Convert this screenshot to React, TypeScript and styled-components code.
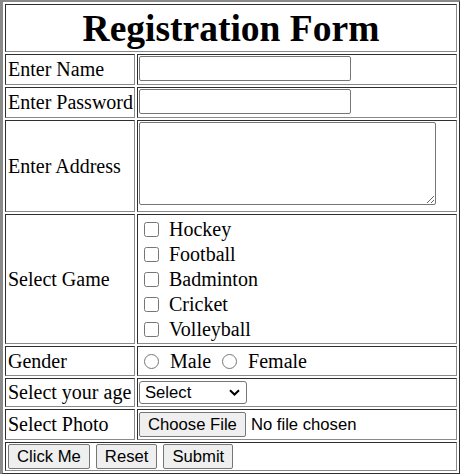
import React from 'react';
import styled, { createGlobalStyle } from 'styled-components';

const GlobalStyle = createGlobalStyle`
  body {
    margin: 0;
    background: #fff;
    font-family: "Liberation Serif", "Times New Roman", serif;
  }
`;

const FormTable = styled.table`
  box-sizing: border-box;
  width: 461px;
  border: 2px solid;
  border-left-width: 3px;
  border-color: #8a8a8a #2e2e2e #2e2e2e #8a8a8a;
  border-spacing: 2px;
  font-size: 20px;
  color: #000;
`;

const Row = styled.tr<{ $h: number }>`
  height: ${p => p.$h}px;
`;

const Cell = styled.td`
  border: 1px solid;
  border-color: #2e2e2e #8a8a8a #8a8a8a #2e2e2e;
  padding: 1px;
  vertical-align: middle;
`;

const Title = styled.th`
  border: 1px solid;
  border-color: #2e2e2e #8a8a8a #8a8a8a #2e2e2e;
  padding: 1px;
  font-size: 37.5px;
  font-weight: bold;
  text-align: center;
`;

const Label = styled(Cell)`
  width: 125px;
  padding-left: 2px;
  white-space: nowrap;
`;

const uiFont = `16.67px "Liberation Sans", Arial, sans-serif`;

const TextInput = styled.input`
  display: block;
  box-sizing: border-box;
  width: 212px;
  height: 25px;
  margin: 0 0 2px 0;
  padding: 1px 3px;
  border: 1px solid #767676;
  border-radius: 2px;
  font: ${uiFont};
`;

const Address = styled.textarea`
  display: block;
  box-sizing: border-box;
  width: 297px;
  height: 83px;
  margin: 0 0 5px 0;
  border: 1px solid #767676;
  border-radius: 2px;
  font: ${uiFont};
`;

const OptionList = styled.div`
  display: flex;
  flex-direction: column;
`;

const Option = styled.label`
  display: flex;
  align-items: center;
  height: 25px;
`;

const Tick = styled.input`
  width: 15px;
  height: 15px;
  margin: 0 10px 0 5px;
`;

const Choices = styled.div`
  display: flex;
  align-items: center;
  height: 26px;
`;

const Choice = styled.label`
  display: flex;
  align-items: center;
  margin-right: 6px;
`;

const Radio = styled.input`
  width: 15px;
  height: 15px;
  margin: 0 11px 0 5px;
`;

const SelectWrap = styled.div`
  position: relative;
  width: 108px;
  svg {
    position: absolute;
    right: 7px;
    top: 8px;
    pointer-events: none;
  }
`;

const AgeSelect = styled.select`
  display: block;
  box-sizing: border-box;
  width: 108px;
  height: 23px;
  margin: 0;
  padding: 0 0 0 5px;
  appearance: none;
  border: 1px solid #767676;
  border-radius: 3px;
  background: #fff;
  color: #000;
  font: ${uiFont};
`;

const FileRow = styled.label`
  display: flex;
  align-items: center;
  gap: 5px;
  font: ${uiFont};
  input { display: none; }
`;

const GreyButton = styled.button`
  box-sizing: border-box;
  height: 25px;
  padding: 0 8px;
  background: #efefef;
  border: 1px solid #767676;
  border-radius: 2px;
  color: #000;
  font: ${uiFont};
`;

const FakeButton = styled.span`
  display: inline-flex;
  align-items: center;
  box-sizing: border-box;
  height: 25px;
  padding: 0 8px;
  background: #efefef;
  border: 1px solid #767676;
  border-radius: 2px;
`;

const Actions = styled.div`
  display: flex;
  gap: 6px;
  padding-left: 1px;
`;

const games = ['Hockey', 'Football', 'Badminton', 'Cricket', 'Volleyball'];

export default function App() {
  return (
    <>
      <GlobalStyle />
      <form onSubmit={e => e.preventDefault()}>
        <FormTable>
          <tbody>
            <Row $h={48}>
              <Title colSpan={2}>Registration Form</Title>
            </Row>
            <Row $h={31}>
              <Label>Enter Name</Label>
              <Cell><TextInput type="text" /></Cell>
            </Row>
            <Row $h={31}>
              <Label>Enter Password</Label>
              <Cell><TextInput type="password" /></Cell>
            </Row>
            <Row $h={92}>
              <Label>Enter Address</Label>
              <Cell><Address /></Cell>
            </Row>
            <Row $h={130}>
              <Label>Select Game</Label>
              <Cell>
                <OptionList>
                  {games.map(g => (
                    <Option key={g}>
                      <Tick type="checkbox" />
                      {g}
                    </Option>
                  ))}
                </OptionList>
              </Cell>
            </Row>
            <Row $h={29}>
              <Label>Gender</Label>
              <Cell>
                <Choices>
                  <Choice><Radio type="radio" name="gender" />Male</Choice>
                  <Choice><Radio type="radio" name="gender" />Female</Choice>
                </Choices>
              </Cell>
            </Row>
            <Row $h={29}>
              <Label>Select your age</Label>
              <Cell>
                <SelectWrap>
                  <AgeSelect defaultValue="">
                    <option value="">Select</option>
                    <option>18-25</option>
                    <option>26-35</option>
                    <option>36-50</option>
                    <option>50+</option>
                  </AgeSelect>
                  <svg width="11" height="7" viewBox="0 0 11 7">
                    <path d="M1 1.2 L5.5 5.5 L10 1.2" fill="none" stroke="#000" strokeWidth="2" />
                  </svg>
                </SelectWrap>
              </Cell>
            </Row>
            <Row $h={31}>
              <Label>Select Photo</Label>
              <Cell>
                <FileRow>
                  <input type="file" />
                  <FakeButton>Choose File</FakeButton>
                  <span>No file chosen</span>
                </FileRow>
              </Cell>
            </Row>
            <Row $h={29}>
              <Cell colSpan={2}>
                <Actions>
                  <GreyButton type="button">Click Me</GreyButton>
                  <GreyButton type="reset">Reset</GreyButton>
                  <GreyButton type="submit">Submit</GreyButton>
                </Actions>
              </Cell>
            </Row>
          </tbody>
        </FormTable>
      </form>
    </>
  );
}
